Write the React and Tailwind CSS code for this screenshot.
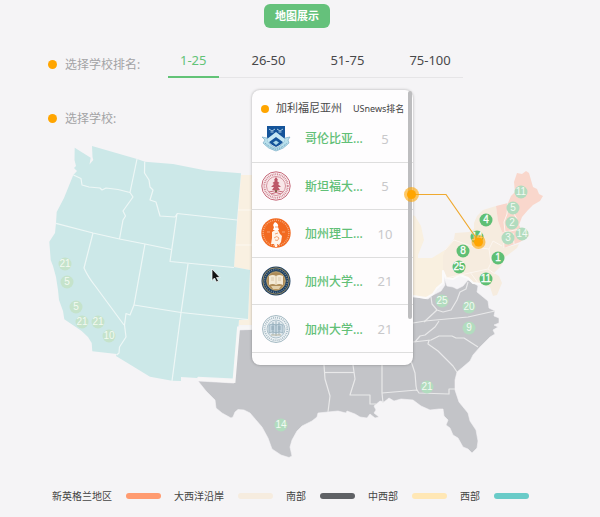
import { useState } from "react";

const TABS = ["1-25", "26-50", "51-75", "75-100"];

const LEGEND = [
  { name: "新英格兰地区", color: "bg-[#ff9b70]" },
  { name: "大西洋沿岸", color: "bg-[#f6ecdf]" },
  { name: "南部", color: "bg-[#5f6165]" },
  { name: "中西部", color: "bg-[#ffe7b5]" },
  { name: "西部", color: "bg-[#69cbc8]" },
];

const WEST =
  "M74.7 147.7L90.7 157.7L89.5 164.5L93.3 160L92.5 157L92 146L137 159L145 161.7L173 164L206 170.5L241 173.3L237 220L234 267L250 270L248 319L239 320L234 378.5L198 376.7L197 378L181 377L181 381L172 380.7L150 376.7L116 356L116.7 354L92.3 351.3L91.7 343L88 337L81.7 331L64.3 319.3L63 311L59 300L58 290L56 277L53 266L50.7 260L49.3 241.7L55 233L56 223L56.7 212L64 198L73.3 175L77 171L74 168L76 166L74.5 160Z";

const WEST_BORDERS = [
  "M73.3 175L81 178.5L82 185L89 187L100 188L102 190L106 188L118 189.5L130 192.5",
  "M137 159L130 192.5L133 197L123 211L125.500 216L123 220L119.500 239",
  "M144.7 161.7L144.500 173L149 180L150 187L153 190L150 200L156 202L160 216L175 217L177 214",
  "M56 223.300L93 233L119.500 239L145 244L171.500 249.500",
  "M177 213.500L237 220",
  "M177 213.500L170 261.500L234 267.500",
  "M145 244L134 305L130 315L126 313.500L124.500 325L126 337L119.500 347L119 353L116.700 355",
  "M93 233L84 268Q88 277 96 287L124 325",
  "M134 305L181 312.500L248 319.500",
  "M188 264L181 313L172 381",
];

const SOUTH =
  "M239 330L260 329L330 310L413 297L417 297L428 299L433 295L441 291L445 285L444 278L447 286L453 287L457 289L463 286L468 280L474 283L478 286L477 292L488 301L489 308L495 311L494 316L499 318L499 323L494 325L498 327L493 330L495 334L490 337L480 347L473 355L470 361L463 367L457 372L455 380L455 390L459 402L468 413L470 421L476 430L478 441L477 448L472 453L468 449L463 447L458 438L453 435L450 428L446 425L448 420L444 416L443 409L439 409L430 410L421 406L413 400L401 399L394 401L389 398L384 402L380 401L374 406L376 410L374 413L379 417L375 418L370 414L367 418L360 417L355 414L347 411L346 413L338 411L328 412L318 413L317 417L312 421L302 426L297 431L292 440L290 447L292 456L289 457.500L281 455L272 449L268 438L262 427L250 413L244 410L238 409.500L235 412L233 417L231 418L222 413L216 408L215 400L206 391L198 381L234 383Z";

const SOUTH_BORDERS = [
  "M324 365L325 379L330 396L328 412",
  "M325 372.500L354 372.500",
  "M353 365L355 379L350 395L370 395L370 404L376 404",
  "M382 365L382 393L383 403",
  "M382 393L417 390L419 393L449 394L449 389L455 389",
  "M411 361L415 373L416 386L417 391",
  "M413 342L431 340L439 336L452 336L456 338L464 338L478 347",
  "M429 340L428 344L438 351L453 366L457 372",
  "M413 323L425 321L468 317L495 311",
  "M439 321L435 327L425 335L420 336L415 342",
  "M431 297L432 304L437 310L443 312L451 310L457 300L460 292L466 289L468 282",
  "M437 310L424 322",
];

const NEW_ENGLAND =
  "M496 206L508 203L511 196L515 192L514 182L517 173L522 174L526 171L529 173L533 187L537 189L539 194L543 196L540 201L533 205L528 210L522 217L519 225L522 231L527 232L529 236L520 242L512 245L504 248L502 232L498 221Z";

const ATLANTIC =
  "M496 206L483 210L477 216L474 223L474 229L469 232L455 233L454 239L445 250L443 256L443 270L446 278L453 279L460 275L468 278L473 283L481 284L490 287L493 296L497 295L502 283L499 276L494 273L501 266L503 262L500 260L508 255L517 248L519 244L504 248L502 232L498 221Z";

const MIDWEST_WEST =
  "M241 175H252L405 215V298H330L252 325H239V320H248L250 270L234 267Z";

const MIDWEST_EAST =
  "M405 213L415 216L421 226L424 240L418 255L418 258L432 258L445 250L443 270L443 281L437 288L433 294L426 298L413 296L400 300Z";

const MARKERS = [
  { x: 65, y: 264, n: 21, tone: "west" },
  { x: 67, y: 282, n: 5, tone: "west" },
  { x: 76, y: 307, n: 5, tone: "west" },
  { x: 82, y: 322, n: 21, tone: "west" },
  { x: 98, y: 322, n: 21, tone: "west" },
  { x: 109, y: 336, n: 10, tone: "west" },
  { x: 281, y: 425, n: 14, tone: "pale" },
  { x: 427, y: 387, n: 21, tone: "pale" },
  { x: 442, y: 301, n: 25, tone: "pale" },
  { x: 469, y: 307, n: 20, tone: "pale" },
  { x: 469, y: 328, n: 9, tone: "pale" },
  { x: 521, y: 192, n: 11, tone: "pale" },
  { x: 513, y: 208, n: 5, tone: "pale" },
  { x: 512, y: 223, n: 2, tone: "pale" },
  { x: 508, y: 238, n: 3, tone: "pale" },
  { x: 522, y: 234, n: 14, tone: "pale" },
  { x: 486, y: 220, n: 4, tone: "solid" },
  { x: 477, y: 237, n: 14, tone: "solid" },
  { x: 463, y: 251, n: 8, tone: "solid" },
  { x: 459, y: 267, n: 25, tone: "solid" },
  { x: 498, y: 258, n: 1, tone: "solid" },
  { x: 486, y: 279, n: 11, tone: "solid" },
];

const TONES = {
  west: { fill: "#c5e3cb", text: "#f3faf2" },
  pale: { fill: "#b2dcbf", text: "#f2faf3" },
  solid: { fill: "#5fbf74", text: "#ffffff" },
};

function ColumbiaLogo() {
  return (
    <svg viewBox="0 0 30 30" className="size-[30px]" aria-hidden="true">
      <path d="M1 14L6 15Q7 22 15 25Q23 22 24 15L29 14L27 17L28 20Q23 26 15 28Q7 26 2 20L4 17Z" fill="#b9e0ec" stroke="#6fa3bd" strokeWidth="0.6" />
      <path d="M6 3H24V14Q23 21 15 24Q7 21 6 14Z" fill="#15549a" />
      <path d="M6 16L15 9L24 16L22.500 19.500L15 14L7.500 19.500Z" fill="#c6e8f4" />
      <path d="M8 6L11 8L14 6M16 6L19 8L22 6M9.500 9H12.500M17.500 9H20.500" stroke="#a9cde4" strokeWidth="1" fill="none" />
      <path d="M12 19.500L15 17.500L18 19.500L15 22Z" fill="#a9d8ea" />
      <path d="M4 20Q10 25.500 15 26.300Q20 25.500 26 20" stroke="#5c94b4" strokeWidth="1" strokeDasharray="1 1" fill="none" />
    </svg>
  );
}

function StanfordLogo() {
  return (
    <svg viewBox="0 0 30 30" className="size-[30px]" aria-hidden="true">
      <circle cx="15" cy="15" r="14.200" fill="#fbf1f2" stroke="#c66b7b" strokeWidth="1" />
      <circle cx="15" cy="15" r="11.700" fill="none" stroke="#d18b97" strokeWidth="2" strokeDasharray="1 0.8" />
      <circle cx="15" cy="15" r="9.500" fill="#f8e6e8" stroke="#c66b7b" strokeWidth="0.7" />
      <path d="M15 6L17 9L16 10L18.500 12L17 13L20 16L17 16L19 19H16V22H14V19H11L13 16H10L13 13L11.500 12L14 10L13 9Z" fill="#bd5768" />
      <path d="M8 21Q15 18 22 21M10 23Q15 20 20 23" stroke="#c66b7b" strokeWidth="1" fill="none" />
      <circle cx="15" cy="20" r="1" fill="#6f6a42" />
    </svg>
  );
}

function CaltechLogo() {
  return (
    <svg viewBox="0 0 30 30" className="size-[30px]" aria-hidden="true">
      <circle cx="15" cy="15" r="14.700" fill="#f26a21" />
      <circle cx="15" cy="15" r="12.800" fill="none" stroke="#f7a878" strokeWidth="1.400" strokeDasharray="1 1" />
      <path d="M14 4Q18 6 17 9L18 12H12L13 9Q11 7 14 4Z" fill="#fff" />
      <path d="M11 14L14 12H17L19 16L21 18L20 24L18 27L16 26L16 29H14L13 26L10 26L11 20Z" fill="#fff4ea" />
      <path d="M14 9H17M14 16L17 15M13 20Q16 17 18 20Q17 24 14 22" stroke="#f29a65" strokeWidth="0.9" fill="none" />
      <path d="M6 14H9M21 14H24" stroke="#fbb48a" strokeWidth="0.8" />
    </svg>
  );
}

function BerkeleyLogo() {
  return (
    <svg viewBox="0 0 30 30" className="size-[30px]" aria-hidden="true">
      <circle cx="15" cy="15" r="14.500" fill="#1d3f61" />
      <circle cx="15" cy="15" r="13.200" fill="none" stroke="#b59a62" strokeWidth="0.8" />
      <circle cx="15" cy="15" r="11.400" fill="none" stroke="#6f8190" strokeWidth="1.500" strokeDasharray="1 1.200" />
      <circle cx="15" cy="15" r="9.300" fill="#ad8b58" stroke="#d4b578" strokeWidth="0.800" />
      <path d="M8 10Q12 8 15 10Q18 8 22 10V19Q18 17 15 19Q12 17 8 19Z" fill="#f4ead7" />
      <path d="M15 10V19M10 12H13M10 14H13M17 12H20M17 14H20" stroke="#d5c19f" strokeWidth="0.8" />
      <path d="M10 20H20L18 23H12Z" fill="#e3cfaa" />
    </svg>
  );
}

function UclaLogo() {
  return (
    <svg viewBox="0 0 30 30" className="size-[30px]" aria-hidden="true">
      <circle cx="15" cy="15" r="13.500" fill="#f1f5f7" stroke="#91a9b5" strokeWidth="0.8" />
      <circle cx="15" cy="15" r="11.300" fill="none" stroke="#a7bbc5" strokeWidth="1.800" strokeDasharray="1 1" />
      <circle cx="15" cy="15" r="9" fill="#e2eaee" stroke="#93adba" strokeWidth="0.700" />
      <path d="M8 11Q12 9 15 11Q18 9 22 11V19Q18 17 15 19Q12 17 8 19Z" fill="#c4d5df" stroke="#829fae" strokeWidth="0.6" />
      <path d="M15 7V22M10 13H13M10 15H13M17 13H20M17 15H20M12 8V21M18 8V21" stroke="#829fae" strokeWidth="0.7" />
      <path d="M10 21H20" stroke="#b8b49f" strokeWidth="1" />
    </svg>
  );
}

const SCHOOLS = [
  { name: "哥伦比亚...", rank: 5, Logo: ColumbiaLogo },
  { name: "斯坦福大...", rank: 5, Logo: StanfordLogo },
  { name: "加州理工...", rank: 10, Logo: CaltechLogo },
  { name: "加州大学...", rank: 21, Logo: BerkeleyLogo },
  { name: "加州大学...", rank: 21, Logo: UclaLogo },
];

function RegionMap() {
  return (
    <svg viewBox="0 135 600 345" className="block h-auto w-full" role="img" aria-label="地图">
      <path d={MIDWEST_WEST} fill="#f9f0e1" />
      <path d="M238 210H252M236 245H252" stroke="#fcf8f1" />
      <path d={MIDWEST_EAST} fill="#f9f0e0" />
      <path d={WEST} fill="#cce8e8" />
      <g fill="none" stroke="#eef7f6" strokeWidth="1.2" strokeLinejoin="round">
        {WEST_BORDERS.map((d) => <path key={d} d={d} />)}
      </g>
      <path d={SOUTH} fill="#c3c4c8" stroke="#f5f4f6" strokeWidth="0.6" />
      <path d="M198 379L234 381.500L238.500 328H252" fill="none" stroke="#f7f6f6" strokeWidth="3" />
      <g fill="none" stroke="#e9e9ea" strokeWidth="1.2" strokeLinejoin="round">
        {SOUTH_BORDERS.map((d) => <path key={d} d={d} />)}
      </g>
      <path d={ATLANTIC} fill="#f6ecdf" />
      <path d={NEW_ENGLAND} fill="#f9d7cc" />
      <path d="M413 296L426 298L433 294L437 288L443 283V271L446 278L453 279L460 275L468 278L473 283L481 284" fill="none" stroke="#fbfafa" strokeWidth="2" strokeLinejoin="round" />
      <g fill="none" stroke="#fcf6f0" strokeWidth="1">
        <path d="M445 250L454 240L474 247L489 249L493 241L502 246M489 249L491 263L488 269L446 278M488 269L495 274M470 272L478 283" />
        <path d="M508 203L507 214L504 222L505 232L520 229M508 204L517 219M503 232L504 248M513 233L514 244" />
      </g>
      {MARKERS.map((m) => (
        <g key={`${m.x}-${m.y}`}>
          <circle cx={m.x} cy={m.y} r="6.500" fill={TONES[m.tone].fill} />
          <text
            x={m.x}
            y={m.y + 3}
            textAnchor="middle"
            fontSize="10"
            className="font-['Liberation_Sans',sans-serif]"
            stroke={m.tone === "solid" ? "#ffffff" : "none"}
            strokeWidth="0.3"
            fill={TONES[m.tone].text}
          >
            {m.n}
          </text>
        </g>
      ))}
      <path d="M412 194.500H446L479 242" fill="none" stroke="#efa92f" strokeWidth="1.200" />
      <circle cx="478.500" cy="242" r="7" fill="#ffa500" fillOpacity="0.6" />
      <circle cx="478.500" cy="242" r="4.500" fill="#ffa500" />
      <path d="M212 269V280.500L214.500 278L216.500 282L218.500 281L216.500 277.500H220Z" fill="#111" stroke="#fff" strokeWidth="0.7" />
    </svg>
  );
}

function StatePanel() {
  return (
    <section className="absolute -top-[45px] left-[42%] h-[275px] w-[161px] rounded-lg bg-[#fefdfe] shadow-[0_0_3px_rgba(0,0,0,0.3)]">
      <header className="flex h-[25px] items-center pt-3 pl-[9px]">
        <span className="size-2 shrink-0 rounded-full bg-[#ffa500]" />
        <h2 className="ml-[7px] text-[11px] whitespace-nowrap text-[#4a4a4a]">加利福尼亚州</h2>
        <span className="ml-[11px] text-[9px] whitespace-nowrap text-[#444]">USnews排名</span>
      </header>
      <ul className="flex h-[238px] flex-col">
        {SCHOOLS.map(({ name, rank, Logo }, i) => (
          <li key={i} className="flex flex-1 items-center border-b border-[#dedede] pl-[9px]">
            <Logo />
            <span className="ml-[14px] w-[58px] pt-[2px] text-xs font-medium whitespace-nowrap text-[#62c077]">{name}</span>
            <span className="ml-2 w-[28px] pt-[2px] text-center text-[13px] text-[#c8c8ca]">{rank}</span>
          </li>
        ))}
      </ul>
      <span className="absolute top-px right-px h-[228px] w-1 rounded-full bg-[#bdbdbf]" />
      <span className="absolute top-[97px] -right-[6px] flex size-[15px] items-center justify-center rounded-full bg-[#ffa500]/60">
        <span className="size-[9px] rounded-full bg-[#ffa500]" />
      </span>
    </section>
  );
}

export default function App() {
  const [active, setActive] = useState(TABS[0]);
  return (
    <main className="min-h-screen bg-[#f5f4f6] pt-1 font-['Noto_Sans','Noto_Sans_CJK_SC',sans-serif]">
      <div className="flex justify-center pr-[6px]">
        <button type="button" className="h-6 rounded-md bg-[#65c17b] px-[11px] text-[11px] font-bold text-white">
          地图展示
        </button>
      </div>

      <div className="mt-[18px] flex h-8 items-center pl-12">
        <span className="mt-1 size-[9px] rounded-full bg-[#ffa500]" />
        <span className="ml-2 w-[103px] pt-[6px] text-xs text-[#a3a3a5]">选择学校排名:</span>
        <div role="tablist" aria-label="选择学校排名" className="flex gap-[21px] border-b border-[#e6e5e7]">
          {TABS.map((t) => (
            <button
              key={t}
              type="button"
              role="tab"
              aria-selected={active === t}
              onClick={() => setActive(t)}
              className={`-mb-px h-8 border-b-2 px-3 text-[13px] ${active === t ? "border-[#62c377] text-[#62c377]" : "border-transparent text-[#48484a]"}`}
            >
              {t}
            </button>
          ))}
        </div>
      </div>

      <div className="mt-[31px] flex h-[18px] items-center pl-12">
        <span className="size-[9px] rounded-full bg-[#ffa500]" />
        <span className="ml-2 pt-[2px] text-xs text-[#a3a3a5]">选择学校:</span>
      </div>

      <div className="relative mt-2">
        <RegionMap />
        <StatePanel />
      </div>

      <ul className="flex flex-wrap items-center gap-[13px] pt-2 pl-[52px]">
        {LEGEND.map((l) => (
          <li key={l.name} className="flex items-center gap-[14px] text-[10px] leading-4 text-[#444]">
            {l.name}
            <span className={`h-[6px] w-[35px] rounded-full ${l.color}`} />
          </li>
        ))}
      </ul>
    </main>
  );
}
